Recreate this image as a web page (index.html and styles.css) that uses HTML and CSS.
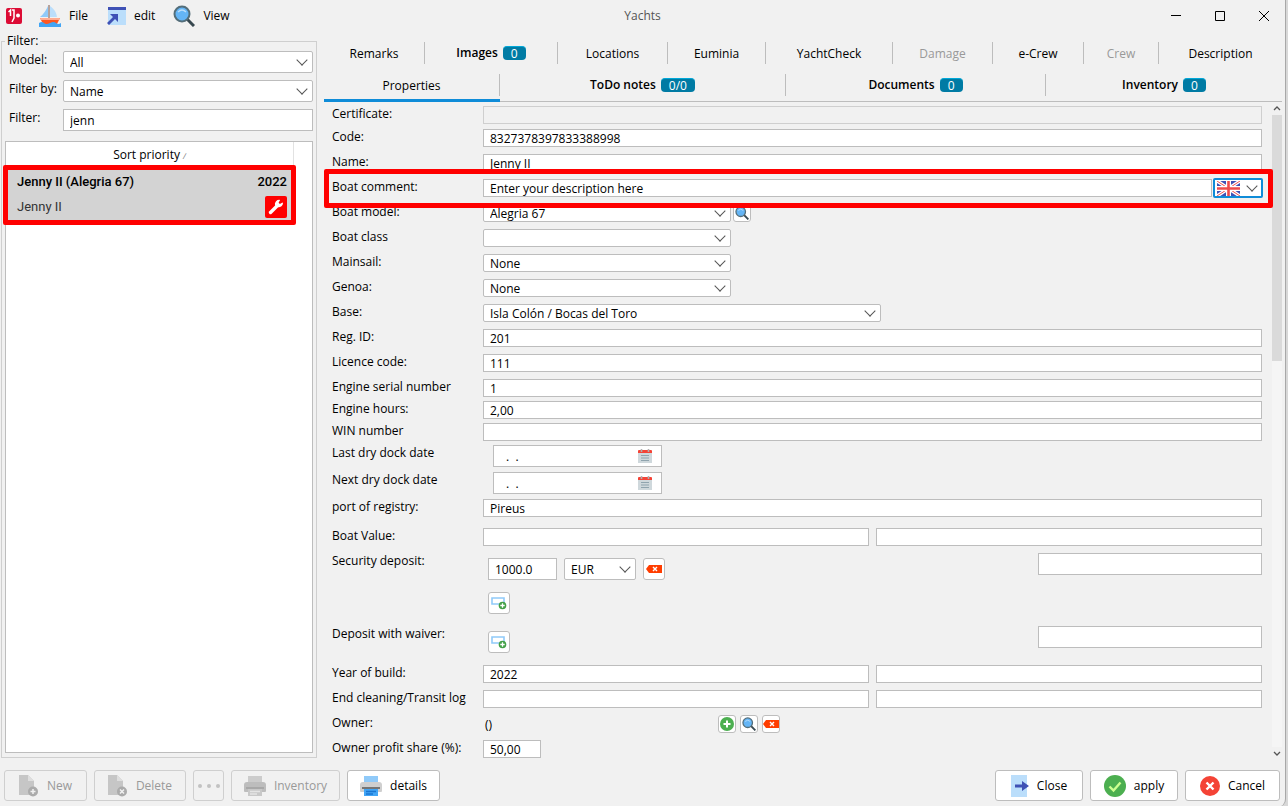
FILE: index.html
```html
<!DOCTYPE html>
<html lang="en">
<head>
  <meta charset="UTF-8">
  <title>Yachts</title>
  <link rel="stylesheet" href="styles.css">
</head>
<body>
  <!-- shared icons -->
  <svg class="defs" width="0" height="0">
    <symbol id="i-search" viewBox="0 0 22 22">
      <path d="M14 14l7 7" stroke="#37474f" stroke-width="3"/>
      <circle cx="9" cy="9" r="7.5" fill="#64b5f6" stroke="#546e7a" stroke-width="2"/>
      <path d="M5 7q4-4 8 0" stroke="#bbdefb" stroke-width="1.4" fill="none"/>
    </symbol>
    <symbol id="i-clear" viewBox="0 0 16 8">
      <path d="M0 4l3-4h13v8H3z" fill="#ff3d00"/>
      <path d="M7 2l4 4M11 2L7 6" stroke="#fff" stroke-width="1.4"/>
    </symbol>
    <symbol id="i-add-row" viewBox="0 0 16 14">
      <path d="M1 2h12v6H1z" fill="#fff" stroke="#90caf9" stroke-width="1.6"/>
      <circle cx="11.500" cy="9.500" r="3.800" fill="#43a047"/>
      <path d="M11.500 7.300v4.400M9.300 9.500h4.400" stroke="#fff" stroke-width="1.300"/>
    </symbol>
    <symbol id="i-calendar" viewBox="0 0 14 14">
      <path d="M0 3h14v11H0z" fill="#cfd8dc"/>
      <path d="M0 4V2q0-1 1-1h12q1 0 1 1v2z" fill="#f44336"/>
      <path d="M3.500 0v3M10.500 0v3" stroke="#b0aeb0" stroke-width="1.600"/>
      <path d="M3 6.500h8M3 9h8M3 11.500h8" stroke="#90a4ae" stroke-width="1.200"/>
    </symbol>
    <symbol id="i-file" viewBox="0 0 20 22">
      <path d="M0 0h9l6 6v14H0z" fill="#c6c6c6"/>
      <path d="M9 0v6h6z" fill="#dedede"/>
      <circle cx="14" cy="16.500" r="5" fill="#ababab"/>
    </symbol>
    <symbol id="i-printer" viewBox="0 0 22 22">
      <path class="p-paper" d="M4 1h14v7H4z"/>
      <path class="p-body" d="M3 7h16q3 0 3 3v6q0 1-1 1H1q-1 0-1-1v-6q0-3 3-3z"/>
      <path class="p-dark" d="M2 12h18v2H2z"/>
      <path class="p-out" d="M4 14h14v7H4z"/>
      <path class="p-line" d="M6 16.500h10M6 19h7" stroke-width="1.300"/>
    </symbol>
  </svg>

  <div class="window">
    <header class="titlebar">
      <svg class="logo" width="16" height="16" viewBox="0 0 16 16">
        <rect width="16" height="16" rx="2" fill="#dc0c35"/>
        <path d="M2.500 4l2-2v6M6 2h2v8l-2 4" fill="none" stroke="#fff" stroke-width="1.500"/>
        <circle cx="12" cy="7.500" r="2" fill="#fff"/>
      </svg>
      <button class="menu">
        <svg width="22" height="22" viewBox="0 0 22 22">
          <path d="M9 1v11H1q5-4 8-11z" fill="#90caf9"/>
          <path d="M11 1q6 4 7 11h-7z" fill="#bbdefb"/>
          <path d="M10 0v14" stroke="#795548" stroke-width="1"/>
          <path d="M1 13h20l-3 6H4z" fill="#ff5722"/>
          <path d="M1 13h20l-1 2H2z" fill="#ffab91"/>
          <path d="M0 18q3-2 5 0t6 0t6 0t5 0v4H0z" fill="#42a5f5"/>
        </svg>
        File
      </button>
      <button class="menu">
        <svg width="20" height="20" viewBox="0 0 20 20">
          <path d="M2 1h18v18H2z" fill="#bbdefb"/>
          <path d="M2 1h18v3H2z" fill="#3f51b5"/>
          <path d="M4 8h8v8l-3-3-6 6-2-2 6-6z" fill="#3f51b5"/>
        </svg>
        edit
      </button>
      <button class="menu">
        <svg width="22" height="22"><use href="#i-search"/></svg>
        View
      </button>
      <span class="title">Yachts</span>
      <div class="win-buttons">
        <button aria-label="Minimize"><svg width="10" height="10"><path d="M0 4.500h10" stroke="#000"/></svg></button>
        <button aria-label="Maximize"><svg width="10" height="10"><path d="M.5.500h9v9h-9z" fill="none" stroke="#000"/></svg></button>
        <button aria-label="Close window"><svg width="10" height="10"><path d="M0 0l10 10M10 0L0 10" stroke="#000"/></svg></button>
      </div>
    </header>

    <main class="main">
      <fieldset class="sidebar">
        <legend>Filter:</legend>
        <div class="filters">
          <label for="model">Model:</label>
          <span class="select tall"><select id="model"><option>All</option></select></span>
          <label for="filterBy">Filter by:</label>
          <span class="select tall"><select id="filterBy"><option>Name</option></select></span>
          <label for="filter">Filter:</label>
          <input class="tall" type="text" id="filter" value="jenn">
        </div>
        <div class="list">
          <div class="list-head"><span>Sort priority <i>∕</i></span></div>
          <div class="boat">
            <div class="boat-line boat-name"><span>Jenny II (Alegria 67)</span><span>2022</span></div>
            <div class="boat-line">
              <span>Jenny II</span>
              <svg class="wrench" width="22" height="22" viewBox="0 0 22 22">
                <rect width="22" height="22" rx="2" fill="#f00"/>
                <path d="M5.500 16.500l7-7" stroke="#fff" stroke-width="3.400" stroke-linecap="round"/>
                <path d="M17.500 6.500l-2.600 1.400-1.300-1.200 1.500-2.800A4.500 4.500 0 0 0 10 9.500a4.500 4.500 0 0 0 8-2.500z" fill="#fff"/>
              </svg>
            </div>
          </div>
        </div>
      </fieldset>

      <section class="content">
        <nav class="tabs tabs-top">
          <button>Remarks</button>
          <button class="counted">Images <b>0</b></button>
          <button>Locations</button>
          <button>Euminia</button>
          <button>YachtCheck</button>
          <button disabled>Damage</button>
          <button>e-Crew</button>
          <button disabled>Crew</button>
          <button>Description</button>
        </nav>
        <nav class="tabs tabs-bottom">
          <button class="active">Properties</button>
          <button class="counted">ToDo notes <b>0/0</b></button>
          <button class="counted">Documents <b>0</b></button>
          <button class="counted">Inventory <b>0</b></button>
        </nav>

        <div class="scroll-area">
          <form class="form">
            <div class="row dock"><label for="certificate">Certificate:</label><input type="text" id="certificate" disabled></div>
            <div class="row"><label for="code">Code:</label><input type="text" id="code" value="8327378397833388998"></div>
            <div class="row"><label for="name">Name:</label><input type="text" id="name" value="Jenny II"></div>
            <div class="row comment">
              <label for="comment">Boat comment:</label>
              <div class="fields">
                <input type="text" id="comment" value="Enter your description here">
                <span class="select language">
                  <select aria-label="Language"><option></option></select>
                  <svg class="flag" width="23" height="15" viewBox="0 0 23 15">
                    <path d="M0 0h23v15H0z" fill="#3f51b5"/>
                    <path d="M0 0l23 15M23 0L0 15" stroke="#fff" stroke-width="3.500"/>
                    <path d="M0 0l23 15M23 0L0 15" stroke="#ef5350" stroke-width="1"/>
                    <path d="M11.500 0v15M0 7.500h23" stroke="#fff" stroke-width="5"/>
                    <path d="M11.500 0v15M0 7.500h23" stroke="#ef4b4b" stroke-width="2.600"/>
                  </svg>
                </span>
              </div>
            </div>
            <div class="row">
              <label for="boatModel">Boat model:</label>
              <div class="fields near">
                <span class="select medium"><select id="boatModel"><option>Alegria 67</option></select></span>
                <button type="button" class="icon-btn" aria-label="Find model"><svg width="14" height="14"><use href="#i-search"/></svg></button>
              </div>
            </div>
            <div class="row"><label for="boatClass">Boat class</label><span class="select medium"><select id="boatClass"><option></option></select></span></div>
            <div class="row"><label for="mainsail">Mainsail:</label><span class="select medium"><select id="mainsail"><option>None</option></select></span></div>
            <div class="row"><label for="genoa">Genoa:</label><span class="select medium"><select id="genoa"><option>None</option></select></span></div>
            <div class="row"><label for="base">Base:</label><span class="select wide"><select id="base"><option>Isla Colón / Bocas del Toro</option></select></span></div>
            <div class="row"><label for="regId">Reg. ID:</label><input type="text" id="regId" value="201"></div>
            <div class="row"><label for="licence">Licence code:</label><input type="text" id="licence" value="111"></div>
            <div class="row tight"><label for="serial">Engine serial number</label><input type="text" id="serial" value="1"></div>
            <div class="row tight"><label for="hours">Engine hours:</label><input type="text" id="hours" value="2,00"></div>
            <div class="row tight"><label for="win">WIN number</label><input type="text" id="win"></div>
            <div class="row dock">
              <label for="lastDock">Last dry dock date</label>
              <span class="date"><input type="text" id="lastDock" value=".  ."><svg width="14" height="14"><use href="#i-calendar"/></svg></span>
            </div>
            <div class="row dock">
              <label for="nextDock">Next dry dock date</label>
              <span class="date"><input type="text" id="nextDock" value=".  ."><svg width="14" height="14"><use href="#i-calendar"/></svg></span>
            </div>
            <div class="row port"><label for="port">port of registry:</label><input type="text" id="port" value="Pireus"></div>
            <div class="row">
              <label for="boatValue">Boat Value:</label>
              <div class="fields"><input type="text" id="boatValue"><input type="text" aria-label="Boat value note"></div>
            </div>
            <div class="row loose">
              <label for="deposit">Security deposit:</label>
              <div class="fields">
                <div class="deposit">
                  <div class="fields">
                    <input class="tall amount" type="text" id="deposit" value="1000.0">
                    <span class="select tall currency"><select aria-label="Currency"><option>EUR</option></select></span>
                    <button type="button" class="icon-btn big" aria-label="Clear deposit"><svg width="16" height="8"><use href="#i-clear"/></svg></button>
                  </div>
                  <button type="button" class="icon-btn big" aria-label="Add deposit"><svg width="16" height="14"><use href="#i-add-row"/></svg></button>
                </div>
                <input class="tall note" type="text" aria-label="Security deposit note">
              </div>
            </div>
            <div class="row loose">
              <label for="waiver">Deposit with waiver:</label>
              <div class="fields">
                <div class="deposit">
                  <button type="button" class="icon-btn big" aria-label="Add waiver deposit"><svg width="16" height="14"><use href="#i-add-row"/></svg></button>
                </div>
                <input class="tall note" type="text" id="waiver">
              </div>
            </div>
            <div class="row">
              <label for="year">Year of build:</label>
              <div class="fields"><input type="text" id="year" value="2022"><input type="text" aria-label="Year note"></div>
            </div>
            <div class="row">
              <label for="cleaning">End cleaning/Transit log</label>
              <div class="fields"><input type="text" id="cleaning"><input type="text" aria-label="Cleaning note"></div>
            </div>
            <div class="row">
              <span>Owner:</span>
              <div class="fields owner">
                <output>()</output>
                <button type="button" class="icon-btn" aria-label="Add owner">
                  <svg width="14" height="14"><circle cx="7" cy="7" r="7" fill="#4caf50"/><path d="M7 3.500v7M3.500 7h7" stroke="#fff" stroke-width="2"/></svg>
                </button>
                <button type="button" class="icon-btn" aria-label="Find owner"><svg width="14" height="14"><use href="#i-search"/></svg></button>
                <button type="button" class="icon-btn" aria-label="Clear owner"><svg width="16" height="8"><use href="#i-clear"/></svg></button>
              </div>
            </div>
            <div class="row"><label for="share">Owner profit share (%):</label><input class="share" type="text" id="share" value="50,00"></div>
          </form>
          <div class="scrollbar">
            <svg width="8" height="5"><path d="M1 4l3-3 3 3" fill="none" stroke="#555" stroke-width="1.300"/></svg>
            <div class="track"><div class="thumb"></div></div>
            <svg width="8" height="5"><path d="M1 1l3 3 3-3" fill="none" stroke="#555" stroke-width="1.300"/></svg>
          </div>
        </div>
      </section>
    </main>

    <footer class="actions">
      <button class="w-new" disabled>
        <svg width="20" height="22"><use href="#i-file"/><path d="M14 14v5M11.500 16.500h5" stroke="#f1f1f1" stroke-width="1.500"/></svg>New
      </button>
      <button class="w-delete" disabled>
        <svg width="20" height="22"><use href="#i-file"/><path d="M12 14.500l4 4M16 14.500l-4 4" stroke="#f1f1f1" stroke-width="1.500"/></svg>Delete
      </button>
      <button class="w-more" aria-label="More" disabled>
        <svg width="22" height="4"><circle cx="2" cy="2" r="2" fill="#c2c2c2"/><circle cx="11" cy="2" r="2" fill="#c2c2c2"/><circle cx="20" cy="2" r="2" fill="#c2c2c2"/></svg>
      </button>
      <button class="w-inventory" disabled><svg class="print-off" width="22" height="22"><use href="#i-printer"/></svg>Inventory</button>
      <button class="w-details"><svg class="print-on" width="22" height="22"><use href="#i-printer"/></svg>details</button>
      <button class="w-close">
        <svg width="18" height="22" viewBox="0 0 18 22"><path d="M0 0h16v22H0z" fill="#bbdefb"/><path d="M4 9.500h7V6l7 5-7 5v-3.500H4z" fill="#3f51b5"/></svg>Close
      </button>
      <button class="w-apply">
        <svg width="22" height="22"><circle cx="11" cy="11" r="11" fill="#4caf50"/><path d="M5.500 11.500l4 4 7-8" fill="none" stroke="#ccff90" stroke-width="2.400"/></svg>apply
      </button>
      <button class="w-cancel">
        <svg width="20" height="20"><circle cx="10" cy="10" r="10" fill="#f44336"/><path d="M6.500 6.500l7 7M13.500 6.500l-7 7" stroke="#fff" stroke-width="2.400"/></svg>Cancel
      </button>
    </footer>
  </div>
</body>
</html>
```
FILE: styles.css
```css
* {
  box-sizing: border-box;
}

body {
  margin: 0;
  background: #d8d8d8;
  font-family: "Open Sans", "Noto Sans", sans-serif;
  font-size: 12px;
  line-height: 16px;
  color: #000;
}

.defs {
  position: absolute;
}

svg {
  flex: none;
}

button, input, select {
  font: inherit;
  color: inherit;
}

button {
  display: flex;
  align-items: center;
  justify-content: center;
  margin: 0;
  padding: 0;
  border: none;
  background: none;
}

.window {
  display: flex;
  flex-direction: column;
  min-height: 100vh;
  margin-right: 2px;
  background: #f1f1f1;
  border-right: 1px solid #a8a8a8;
  border-bottom-right-radius: 8px;
}

/* title bar */
.titlebar {
  position: relative;
  display: flex;
  align-items: center;
  height: 31px;
  padding: 0 16px 0 6px;
}

.logo {
  margin-right: 17px;
}

.menu {
  gap: 8px;
  margin-right: 18px;
}

.title {
  position: absolute;
  left: 50%;
  transform: translateX(-50%);
  color: #555;
}

.win-buttons {
  display: flex;
  gap: 34px;
  margin-left: auto;
}

/* filter panel */
.main {
  display: flex;
  flex: 1;
  gap: 7px;
  padding: 2px 3px 0 1px;
}

.sidebar {
  display: flex;
  flex-direction: column;
  width: 316px;
  margin: 0;
  padding: 2px 3px 4px 3px;
  border: 1px solid #cfcfcf;
}

.sidebar legend {
  padding: 0 2px;
}

.filters {
  display: grid;
  grid-template-columns: 54px 1fr;
  row-gap: 7px;
  padding-left: 4px;
}

.filters label {
  line-height: 18px;
}

.list {
  flex: 1;
  margin-top: 10px;
  border: 1px solid #bdbdbd;
  background: #fff;
}

.list-head {
  width: 288px;
  height: 23px;
  border-right: 1px solid #e2e2e2;
  line-height: 26px;
  text-align: center;
}

.list-head i {
  color: #777;
  font-size: 8px;
}

.boat {
  position: relative;
  width: 293px;
  height: 60px;
  margin-left: -3px;
  padding: 4px 4px 4px 9px;
  border: 5px solid #f00;
  border-radius: 2px;
  background: #d3d3d3;
  font-family: Roboto, sans-serif;
  font-size: 13px;
  color: #333;
}

.boat-line {
  display: flex;
  align-items: center;
  justify-content: space-between;
  height: 22px;
}

.boat-name {
  font-weight: 500;
  color: #000;
  height: 16px;
  margin-bottom: 6px;
}

/* tabs */
.content {
  display: flex;
  flex-direction: column;
  flex: 1;
}

.tabs {
  display: grid;
}

.tabs-top {
  grid-template-columns: 101fr 133fr 110fr 98fr 127fr 100fr 91fr 75fr 123fr;
  padding-top: 9px;
}

.tabs-bottom {
  grid-template-columns: 176fr 286fr 260fr 236fr;
  margin-top: 10px;
  border-bottom: 1px solid #bdbdbd;
}

.tabs button {
  height: 22px;
  padding-top: 2px;
  border-right: 1px solid #bdbdbd;
}

.tabs button:last-child {
  border-right: none;
}

.tabs button:disabled {
  color: #999;
}

.tabs-bottom button {
  margin-bottom: 5px;
}

.tabs-bottom .active {
  position: relative;
}

.active::after {
  content: "";
  position: absolute;
  left: 0;
  right: -1px;
  bottom: -6px;
  height: 3px;
  background: #0f8cd8;
}

.tabs .counted {
  gap: 5px;
  padding: 0;
  font-weight: 600;
}

.counted b {
  height: 14px;
  padding: 0 8px;
  border-top: 1px solid #00a8d8;
  border-radius: 4px;
  background: #007ba4;
  color: #fff;
  font-weight: 400;
  line-height: 13px;
}

/* properties form */
.scroll-area {
  display: flex;
  flex: 1;
  gap: 9px;
}

.form {
  flex: 1;
  padding: 4px 0 0 8px;
}

.row {
  display: grid;
  grid-template-columns: 151px 1fr;
  align-items: start;
  margin-bottom: 7px;
}

.row.tight {
  margin-bottom: 4px;
}

.row.dock {
  margin-bottom: 5px;
}

.row.port {
  margin-bottom: 11px;
}

.row.loose {
  margin-bottom: 12px;
}

.row:last-child {
  margin-bottom: 0;
}

input {
  width: 100%;
  min-width: 0;
  height: 18px;
  padding: 1px 6px 0;
  border: 1px solid #bdbdbd;
  border-radius: 0;
  background: #fff;
  outline: none;
}

input:disabled {
  border-color: #cfcfcf;
  background: #f1f1f1;
}

.select {
  position: relative;
  display: block;
  height: 18px;
}

.select select {
  display: block;
  width: 100%;
  height: 100%;
  padding: 1px 22px 0 6px;
  border: 1px solid #bdbdbd;
  border-radius: 2px;
  background: #fff;
  appearance: none;
  outline: none;
}

.select::after {
  content: "";
  position: absolute;
  right: 7px;
  top: calc(50% - 6px);
  width: 7px;
  height: 7px;
  border-right: 1px solid #555;
  border-bottom: 1px solid #555;
  transform: rotate(45deg);
  pointer-events: none;
}

.tall {
  height: 22px;
}

.medium {
  width: 248px;
}

.wide {
  width: 398px;
}

.fields {
  display: flex;
  gap: 7px;
}

.near {
  gap: 2px;
}

/* red frame round the comment row */
.comment {
  position: relative;
}

.comment::before {
  content: "";
  position: absolute;
  z-index: 1;
  top: -10px;
  bottom: -11px;
  left: -8px;
  right: -11px;
  border: 5px solid #f00;
  border-radius: 2px;
  pointer-events: none;
}

.comment .fields {
  gap: 1px;
}

.language {
  width: 50px;
  height: 20px;
  margin: -1px -1px -1px 0;
  flex: none;
}

.language select {
  border: 2px solid #0f8cd8;
}

.flag {
  position: absolute;
  left: 4px;
  top: 3px;
}

.icon-btn {
  width: 18px;
  height: 18px;
  border: 1px solid #bdbdbd;
  border-radius: 3px;
  background: #fff;
  overflow: hidden;
}

.icon-btn.big {
  width: 22px;
  height: 22px;
}

.date {
  position: relative;
  width: 169px;
  margin-left: 10px;
}

.date input {
  display: block;
  height: 22px;
  padding-left: 12px;
}

.date svg {
  position: absolute;
  right: 10px;
  top: 4px;
}

.deposit {
  display: flex;
  flex: 1;
  flex-direction: column;
  gap: 12px;
  padding: 5px 0 0 5px;
}

.amount {
  width: 69px;
}

.currency {
  width: 72px;
}

.note {
  width: 224px;
}

.owner {
  gap: 4px;
  height: 18px;
}

.owner output {
  width: 231px;
  padding: 2px;
}

.share {
  width: 58px;
}

/* scrollbar */
.scrollbar {
  display: flex;
  flex-direction: column;
  align-items: center;
  gap: 4px;
  width: 11px;
  padding: 4px 0 2px;
}

.track {
  flex: 1;
  width: 10px;
  background: #f5f5f5;
}

.thumb {
  height: 39%;
  background: #dadada;
}

/* bottom buttons */
.actions {
  display: flex;
  gap: 7px;
  padding: 12px 5px 6px 4px;
}

.actions button {
  gap: 8px;
  height: 31px;
  border: 1px solid #bdbdbd;
  border-radius: 3px;
  background: #fff;
}

.actions button:disabled {
  border-color: #cfcfcf;
  background: #f1f1f1;
  color: #999;
}

.w-new {
  width: 83px;
}

.w-delete {
  width: 92px;
}

.w-more {
  width: 31px;
}

.w-inventory {
  width: 109px;
}

.w-details {
  width: 93px;
}

.w-close {
  width: 88px;
  margin-left: auto;
}

.w-apply {
  width: 88px;
}

.w-cancel {
  width: 95px;
}

.print-on {
  --paper: #90caf9;
  --body: #cfcfcf;
  --dark: #757575;
  --out: #42a5f5;
  --line: #1976d2;
}

.print-off {
  --paper: #cccccc;
  --body: #bdbdbd;
  --dark: #a8a8a8;
  --out: #c8c8c8;
  --line: #e4e4e4;
}

.p-paper {
  fill: var(--paper);
}

.p-body {
  fill: var(--body);
}

.p-dark {
  fill: var(--dark);
}

.p-out {
  fill: var(--out);
}

.p-line {
  stroke: var(--line);
}
```
